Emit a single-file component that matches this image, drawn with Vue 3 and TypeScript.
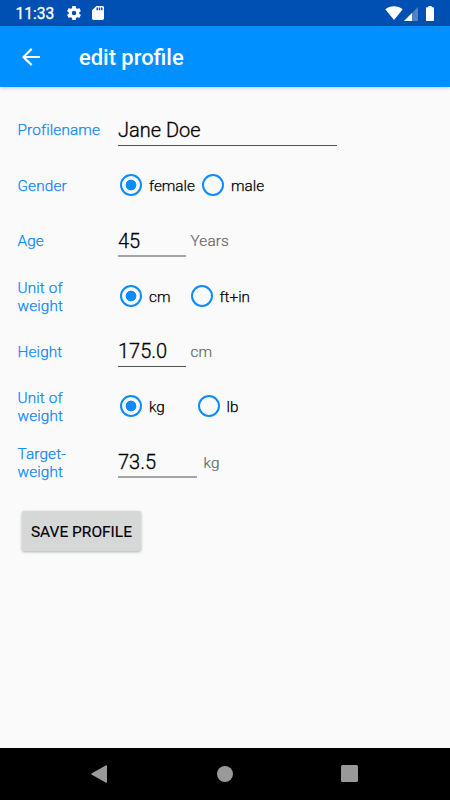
<script setup lang="ts">
import { reactive } from 'vue'

interface Option { label: string; slot: string }
interface Row {
  id: string
  lines: string[]
  kind: 'text' | 'radio'
  size?: string
  unit?: string
  soft?: boolean
  options?: Option[]
}

const rows: Row[] = [
  { id: 'name', lines: ['Profilename'], kind: 'text', size: 'wide' },
  { id: 'gender', lines: ['Gender'], kind: 'radio', options: [{ label: 'female', slot: 'w82' }, { label: 'male', slot: '' }] },
  { id: 'age', lines: ['Age'], kind: 'text', size: 'small', unit: 'Years', soft: true },
  { id: 'heightUnit', lines: ['Unit of', 'weight'], kind: 'radio', options: [{ label: 'cm', slot: 'w70' }, { label: 'ft+in', slot: '' }] },
  { id: 'height', lines: ['Height'], kind: 'text', size: 'small', unit: 'cm' },
  { id: 'weightUnit', lines: ['Unit of', 'weight'], kind: 'radio', options: [{ label: 'kg', slot: 'w77' }, { label: 'lb', slot: '' }] },
  { id: 'target', lines: ['Target-', 'weight'], kind: 'text', size: 'medium', unit: 'kg', soft: true },
]

const values = reactive<Record<string, string>>({
  name: 'Jane Doe',
  gender: 'female',
  age: '45',
  heightUnit: 'cm',
  height: '175.0',
  weightUnit: 'kg',
  target: '73.5',
})
</script>

<template>
  <div class="screen">
    <div class="status">
      <span class="clock">11:33</span>
      <svg class="gear" viewBox="2 2 20 20"><path fill="#fff" d="M19.43 12.98c.04-.32.07-.64.07-.98s-.03-.66-.07-.98l2.11-1.65c.19-.15.24-.42.12-.64l-2-3.46c-.12-.22-.39-.3-.61-.22l-2.49 1c-.52-.4-1.08-.73-1.69-.98l-.38-2.65A.49.49 0 0 0 14 2h-4c-.25 0-.46.18-.49.42l-.38 2.65c-.61.25-1.17.59-1.69.98l-2.49-1c-.23-.09-.49 0-.61.22l-2 3.46c-.13.22-.07.49.12.64l2.11 1.65c-.04.32-.07.65-.07.98s.03.66.07.98l-2.11 1.65c-.19.15-.24.42-.12.64l2 3.46c.12.22.39.3.61.22l2.49-1c.52.4 1.08.73 1.69.98l.38 2.65c.03.24.24.42.49.42h4c.25 0 .46-.18.49-.42l.38-2.65c.61-.25 1.17-.59 1.69-.98l2.49 1c.23.09.49 0 .61-.22l2-3.460c.12-.22.07-.49-.12-.64l-2.110-1.650zM12 15.200a3.200 3.200 0 1 1 0-6.400 3.200 3.200 0 0 1 0 6.400z" /></svg>
      <svg class="card" viewBox="4 2 16 20" preserveAspectRatio="none"><path fill="#fff" d="M18 2h-8L4.020 8 4 20c0 1.100.9 2 2 2h12c1.100 0 2-.9 2-2V4c0-1.100-.9-2-2-2zm-6 6h-2V4h2v4zm3 0h-2V4h2v4zm3 0h-2V4h2v4z" /></svg>
      <span class="fill"></span>
      <svg class="wifi" viewBox="0 0 18 14"><path fill="#fff" d="M9 14 .3 3.300C2.700 1.300 5.700.2 9 .2s6.300 1.100 8.700 3.100z" /></svg>
      <svg class="signal" viewBox="0 0 14 14"><path fill="#4d83c8" d="M14 0v14H0z" /><path fill="#fff" d="M8 6v8H0z" /></svg>
      <svg class="battery" viewBox="0 0 8 15"><path fill="#fff" d="M2.300 0h3.400v1.300H7.200q.8 0 .8.800v12q0 .9-.8.9H.8Q0 15 0 14.100v-12q0-.8.8-.8h1.500z" /></svg>
    </div>
    <header class="bar">
      <svg class="back" viewBox="4 4 16 16"><path fill="#fff" d="M20 11.200H7.530l5.690-5.690L12 4l-8 8 8 8 1.220-1.510L7.530 12.800H20z" /></svg>
      <h1>edit profile</h1>
    </header>
    <main class="form">
      <div v-for="row in rows" :key="row.id" class="row">
        <div class="label"><span v-for="line in row.lines" :key="line">{{ line }}</span></div>
        <template v-if="row.kind === 'text'">
          <div class="field" :class="[row.size, { soft: row.soft }]">
            <input v-model="values[row.id]" type="text" :aria-label="row.lines.join(' ')">
          </div>
          <span v-if="row.unit" class="unit">{{ row.unit }}</span>
        </template>
        <div v-else class="radios">
          <label v-for="opt in row.options" :key="opt.label" class="option" :class="opt.slot">
            <input v-model="values[row.id]" type="radio" :name="row.id" :value="opt.label">
            <span>{{ opt.label }}</span>
          </label>
        </div>
      </div>
      <button class="save" type="button">SAVE PROFILE</button>
    </main>
    <nav class="nav">
      <svg class="tri" viewBox="0 0 16 18"><path fill="#999" d="M15 .3q1-.5 1 .6v16.200q0 1.100-1 .6L.5 9.500Q0 9 .5 8.500z" /></svg>
      <span class="home"></span>
      <span class="recent"></span>
    </nav>
  </div>
</template>

<style>
body { margin: 0; background: #fafafa; }
</style>

<style scoped>
.screen { width: 450px; height: 800px; display: flex; flex-direction: column; background: #fafafa; font-family: Roboto, "Liberation Sans", sans-serif; overflow: hidden; }
.status { flex: none; height: 26px; box-sizing: border-box; padding: 0 16px 0 15.500px; display: flex; align-items: center; background: #004fb3; color: #fff; }
.clock { width: 51.500px; font-size: 15.600px; font-weight: 400; -webkit-text-stroke: .3px currentColor; line-height: 26px; padding-top: 2px; }
.gear { width: 14px; height: 14px; margin-right: 11px; }
.card { width: 12px; height: 14px; }
.fill { flex: 1; }
.wifi { width: 18px; height: 14px; margin-right: 1px; }
.signal { width: 14px; height: 14px; margin: 1px 8px 0 0; }
.battery { width: 8px; height: 15px; margin-top: 1px; }
.bar { flex: none; height: 61px; box-sizing: border-box; padding-left: 22px; display: flex; align-items: center; background: #0090ff; box-shadow: 0 1px 4px rgba(0, 0, 0, .22); }
.back { width: 18px; height: 18px; margin-right: 39px; }
h1 { margin: 2px 0 0; color: #fff; font-size: 21.900px; font-weight: 500; line-height: 26px; }
.form { flex: 1; padding: 16px 17.500px 0; }
.row { height: 55.350px; display: flex; align-items: center; }
.label { width: 100.500px; flex: none; display: flex; flex-direction: column; margin-top: -.4px; color: #0a88ff; font-size: 15.300px; font-weight: 300; line-height: 18px; letter-spacing: .15px; -webkit-text-stroke: .25px currentColor; }
.field { height: 30px; box-sizing: border-box; border-bottom: 1px solid #555; }
.field.soft { height: 31px; border-bottom: 2px solid #a5a5a5; }
.field input { display: block; width: 100%; height: 28px; padding: 0; border: 0; outline: 0; background: transparent; color: #000; font: 300 20px/28px Roboto, sans-serif; -webkit-text-stroke: .3px currentColor; }
.field.soft input { padding-top: 1px; }
.wide { width: 219px; }
.small { width: 68px; margin-right: 4.500px; }
.medium { width: 79px; margin-right: 6.500px; }
.unit { color: #666; font-size: 15.300px; font-weight: 300; line-height: 18px; letter-spacing: .15px; -webkit-text-stroke: .2px currentColor; }
.radios { display: flex; padding-left: 2px; margin-top: -2px; }
.option { display: flex; align-items: center; gap: 7px; color: #000; font-size: 15.300px; font-weight: 300; line-height: 22px; height: 22px; -webkit-text-stroke: .25px currentColor; }
.w82 { width: 82px; }
.w70 { width: 70.500px; }
.w77 { width: 77.500px; }
.option span { padding-top: 2px; }
.option input { appearance: none; box-sizing: border-box; flex: none; width: 22px; height: 22px; margin: 0; border: 2px solid #0c8cff; border-radius: 50%; }
.option input:checked { background: radial-gradient(circle, #0c8cff 5px, transparent 5.700px); }
.save { display: block; width: 119.500px; height: 40px; margin: 21px 0 0 4.200px; padding: 0; border: 0; border-radius: 2px; background: #d6d7d7; box-shadow: 0 1px 3px rgba(0, 0, 0, .3); color: #000; font: 400 15.500px/42px Roboto, sans-serif; -webkit-text-stroke: .15px currentColor; white-space: nowrap; }
.nav { flex: none; height: 52px; box-sizing: border-box; padding: 0 92px 1px 91px; display: flex; align-items: center; justify-content: space-between; background: #000; }
.tri { width: 16px; height: 18px; }
.home { width: 16px; height: 16px; margin-left: 1px; border-radius: 50%; background: #999; }
.recent { width: 17px; height: 17px; border-radius: 1.500px; background: #999; }
</style>
